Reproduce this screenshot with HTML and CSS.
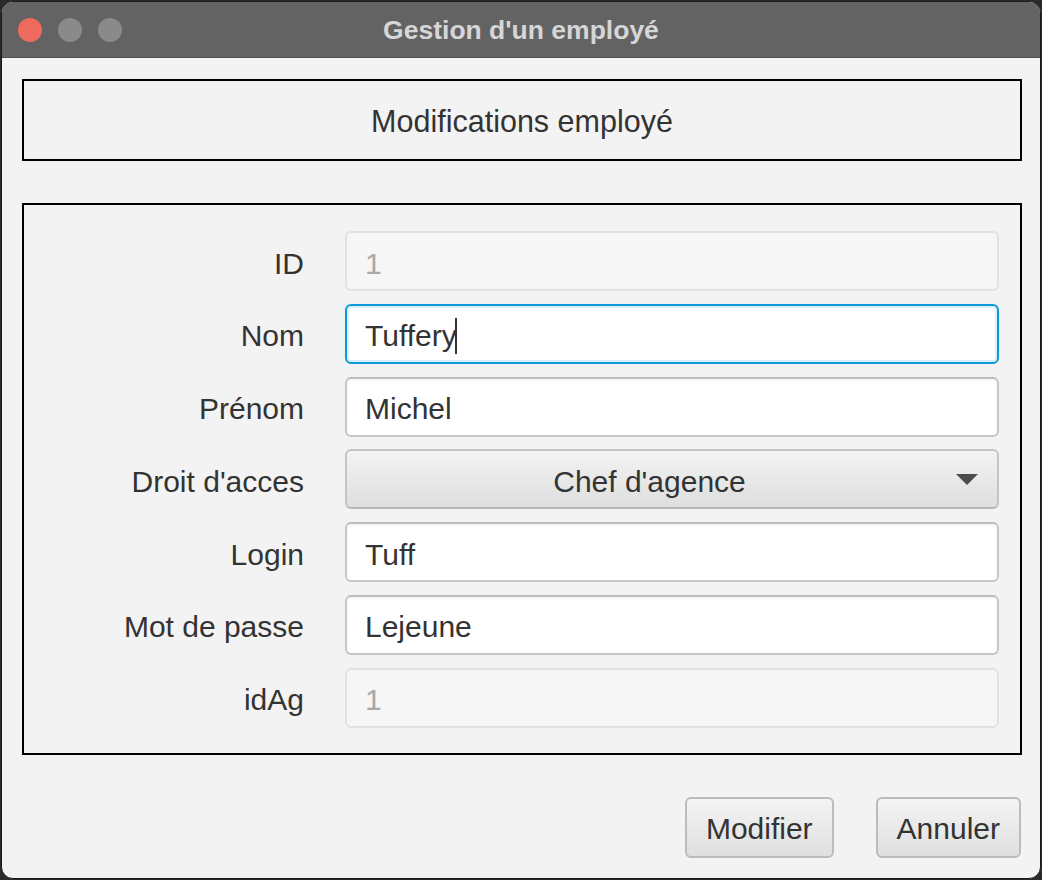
FILE: index.html
```html
<!DOCTYPE html>
<html lang="fr">
<head>
<meta charset="utf-8">
<title>Gestion d'un employé</title>
<link rel="stylesheet" href="styles.css">
</head>
<body>
<div class="window">
  <div class="titlebar">
    <div class="lights">
      <span class="light red"></span>
      <span class="light gray"></span>
      <span class="light gray"></span>
    </div>
    <div class="title">Gestion d'un employé</div>
    <div class="spacer"></div>
  </div>
  <div class="content">
    <div class="header-box">Modifications employé</div>
    <div class="form-box">
      <label class="lbl">ID</label>
      <div class="field disabled">1</div>
      <label class="lbl">Nom</label>
      <div class="field focused">Tuffery<span class="caret"></span></div>
      <label class="lbl">Prénom</label>
      <div class="field">Michel</div>
      <label class="lbl">Droit d'acces</label>
      <div class="combo"><span class="combo-text">Chef d'agence</span><span class="arrow-box"><span class="arrow"></span></span></div>
      <label class="lbl">Login</label>
      <div class="field">Tuff</div>
      <label class="lbl">Mot de passe</label>
      <div class="field">Lejeune</div>
      <label class="lbl">idAg</label>
      <div class="field disabled">1</div>
    </div>
    <div class="actions">
      <button class="btn">Modifier</button>
      <button class="btn">Annuler</button>
    </div>
  </div>
</div>
</body>
</html>
```
FILE: styles.css
```css
html, body {
  margin: 0;
  padding: 0;
}
body {
  background: #2a2a2a;
  width: 1042px;
  height: 880px;
  overflow: hidden;
  font-family: "Liberation Sans", Arial, sans-serif;
}
.window {
  margin: 1px 0 0 1px;
  width: 1038px;
  height: 876px;
  border: 1px solid #1a1a1a;
  border-radius: 12px;
  overflow: hidden;
  background: #f3f3f3;
  display: flex;
  flex-direction: column;
}
.titlebar {
  height: 56px;
  flex: none;
  background: #636363;
  display: grid;
  grid-template-columns: 1fr auto 1fr;
  align-items: center;
  border-bottom: 1px solid #4e4e4e;
  box-sizing: border-box;
}
.lights {
  display: flex;
  gap: 16px;
  padding-left: 16px;
}
.light {
  width: 24px;
  height: 24px;
  border-radius: 50%;
  display: block;
}
.light.red { background: #ee6a5f; }
.light.gray { background: #8a8a8a; }
.title {
  color: #d6d6d6;
  font-weight: bold;
  font-size: 26.5px;
  padding-top: 2px;
}
.content {
  flex: 1;
  padding: 21px 18px 0 20px;
  display: flex;
  flex-direction: column;
}
.header-box {
  height: 82px;
  box-sizing: border-box;
  border: 2px solid #000;
  padding-top: 3px;
  display: flex;
  align-items: center;
  justify-content: center;
  font-size: 30.5px;
  color: #333;
}
.form-box {
  margin-top: 42px;
  border: 2px solid #000;
  padding: 26px 21px 25px 0;
  display: grid;
  grid-template-columns: 280px 1fr;
  column-gap: 41px;
  grid-auto-rows: 60px;
  row-gap: 12.8px;
  align-items: center;
}
.lbl {
  font-size: 30px;
  color: #333;
  text-align: right;
  padding-top: 5px;
}
.field {
  height: 60px;
  box-sizing: border-box;
  background: #fff;
  border: 2px solid #c6c6c6;
  border-top-color: #bcbcbc;
  border-radius: 6px;
  box-shadow: inset 0 2px 2px rgba(0,0,0,0.04);
  padding: 5px 19px 0 18px;
  display: flex;
  align-items: center;
  font-size: 30px;
  color: #333;
}
.field.disabled {
  background: #f6f6f6;
  border-color: #e2e2e2;
  color: #a8a8a8;
  box-shadow: none;
}
.field.focused {
  border: 2px solid #0a9ad6;
  box-shadow: inset 0 0 0 2px #d9eff9;
}
.caret {
  display: inline-block;
  width: 2px;
  height: 36px;
  background: #333;
  margin-left: -2px;
  margin-top: 0;
}
.combo {
  height: 60px;
  box-sizing: border-box;
  border: 2px solid #c4c4c4;
  border-bottom-color: #b8b8b8;
  border-radius: 6px;
  background: linear-gradient(#f3f3f3, #dedede);
  display: flex;
  align-items: center;
  font-size: 30px;
  color: #333;
}
.combo-text {
  flex: 1;
  text-align: center;
  padding-top: 5px;
  padding-right: 4px;
}
.arrow-box {
  display: flex;
  align-items: center;
  padding-right: 19px;
}
.arrow {
  width: 0;
  height: 0;
  border-left: 11px solid transparent;
  border-right: 11px solid transparent;
  border-top: 11px solid #4d4d4d;
}
.actions {
  margin-top: 42px;
  display: flex;
  justify-content: flex-end;
  gap: 42px;
  padding-right: 1px;
}
.btn {
  height: 61px;
  box-sizing: border-box;
  border: 2px solid #bcbcbc;
  border-radius: 6px;
  background: linear-gradient(#f4f4f4, #dfdfdf);
  font-family: "Liberation Sans", Arial, sans-serif;
  font-size: 30px;
  color: #333;
  padding: 3px 19px 0;
}
```
